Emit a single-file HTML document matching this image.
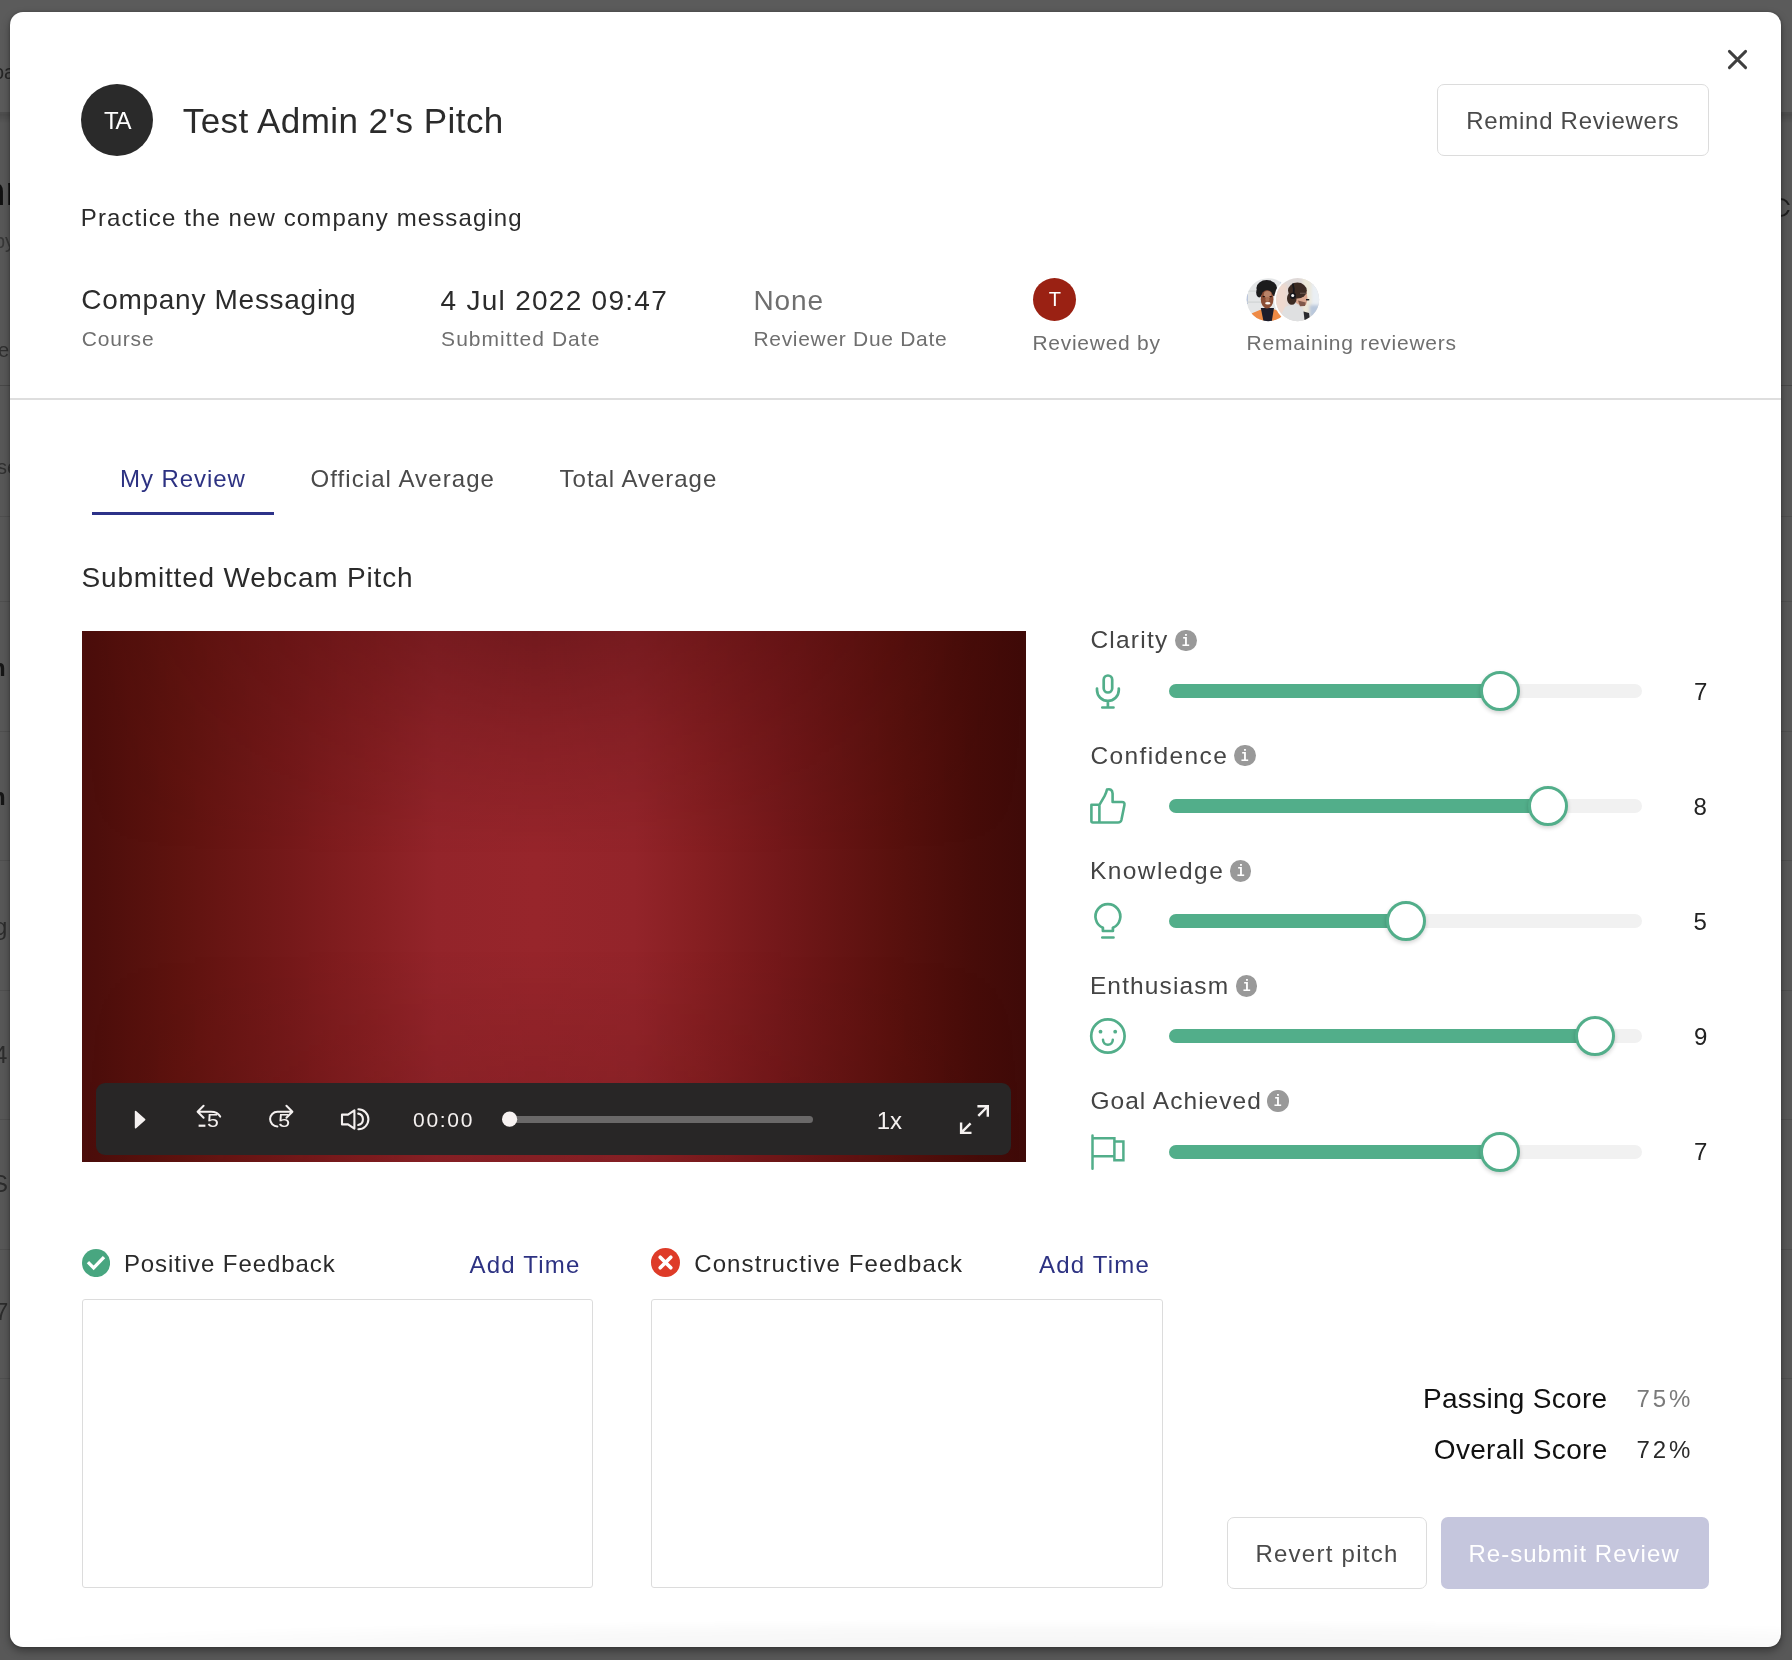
<!DOCTYPE html>
<html lang="en">
<head>
<meta charset="utf-8">
<title>Test Admin 2's Pitch</title>
<style>
*{box-sizing:border-box;margin:0;padding:0}
html,body{width:1792px;height:1660px;overflow:hidden}
body{background:#585858;font-family:"Liberation Sans",Arial,sans-serif;color:#2b2b2b;position:relative}
.abs{position:absolute;white-space:nowrap;line-height:1}
/* backdrop page fragments */
.bg-top{position:absolute;left:0;top:0;width:1792px;height:113px;background:#5b5b5b}
.bg-line{position:absolute;left:0;width:1792px;height:2px;background:#4f4f4f}
.bgt{position:absolute;white-space:nowrap;line-height:1;color:#2a2a2a}
/* modal */
#modal{position:absolute;left:10px;top:12px;width:1771px;height:1635px;background:#fff;border-radius:13px;overflow:hidden;box-shadow:0 4px 8px rgba(0,0,0,.36),0 0 3px rgba(0,0,0,.25)}
#modal .in{position:absolute;left:-10px;top:-12px;width:1792px;height:1660px;will-change:transform}
.gray{color:#6f6f6f}
.ta{border:1px solid #dcdcdc;border-radius:3px;background:#fff}
.sl{font-size:24.5px;color:#444}
.val{font-size:24px;color:#222}
.info{position:absolute;width:21.7px;height:21.7px;border-radius:50%;background:#999;color:#fff;font-family:"Liberation Mono","DejaVu Sans Mono",monospace;font-size:15.5px;line-height:21.7px;text-align:center;overflow:hidden}
.info b{font-weight:bold;display:block;font-size:16.5px;transform:translate(-.1px,.7px) scaleX(.8)}
.trk{position:absolute;left:1169px;width:473px;height:14px;border-radius:7px;background:#f1f1f1}
.trk i{display:block;height:14px;border-radius:7px;background:#52ae8a}
.thumb{position:absolute;width:40px;height:40px;border-radius:50%;background:#fff;border:3px solid #52ae8a;box-shadow:0 2px 4px rgba(0,0,0,.18)}
.btn{position:absolute;border:1.5px solid #dcdcdc;border-radius:7px;background:#fff;display:flex;align-items:center;justify-content:center;font-size:24px;color:#4a4a4a;white-space:nowrap}
</style>
</head>
<body>
<div class="bg-top"></div>
<div id="bgfrag" style="will-change:transform">
<div class="bg-line" style="top:112px;height:2px;background:#4e4e4e"></div>
<div class="bg-line" style="top:385px;height:1px;background:#484848"></div>
<div class="bg-line" style="top:516px;height:1px"></div>
<div class="bg-line" style="top:601px;height:1px"></div>
<div class="bg-line" style="top:731px;height:1px"></div>
<div class="bg-line" style="top:860px;height:1px"></div>
<div class="bg-line" style="top:990px;height:1px"></div>
<div class="bg-line" style="top:1119px;height:1px"></div>
<div class="bg-line" style="top:1249px;height:1px"></div>
<div class="bg-line" style="top:1378px;height:1px"></div>
<div class="bgt" style="left:-7px;top:62px;font-size:20px;color:#262626">oard</div>
<div class="bgt" style="left:-19px;top:171px;font-size:40px;font-weight:bold;color:#111">nn</div>
<div class="bgt" style="left:-6px;top:231px;font-size:20px;color:#383838">by</div>
<div class="bgt" style="left:-2px;top:340px;font-size:20px;color:#303030">er</div>
<div class="bgt" style="left:-3px;top:457px;font-size:20px;color:#303030">se</div>
<div class="bgt" style="left:-9px;top:656px;font-size:24px;font-weight:bold;color:#161616">n</div>
<div class="bgt" style="left:-9px;top:785px;font-size:24px;font-weight:bold;color:#161616">n</div>
<div class="bgt" style="left:-6px;top:915px;font-size:24px;color:#2c2c2c">g</div>
<div class="bgt" style="left:-6px;top:1043px;font-size:24px;color:#2c2c2c">4</div>
<div class="bgt" style="left:-8px;top:1172px;font-size:24px;color:#2c2c2c">S</div>
<div class="bgt" style="left:-5px;top:1300px;font-size:24px;color:#2c2c2c">7</div>
<div style="position:absolute;left:1771px;top:197.5px;width:19px;height:19px;border:2.3px solid #1f1f1f;border-radius:50%"></div><div style="position:absolute;left:1787px;top:204.5px;width:5px;height:5px;background:#595959"></div>
<div style="position:absolute;left:0;top:114px;width:1792px;height:9px;background:linear-gradient(to bottom,rgba(0,0,0,.14),rgba(0,0,0,0))"></div>
</div>
<div id="modal"><div class="in">

<div class="abs" style="left:0;top:1619px;width:1792px;height:28px;background:radial-gradient(ellipse 62% 100% at 60% 100%,rgba(0,0,0,.04),rgba(0,0,0,.025) 60%,rgba(0,0,0,0))"></div>
<!-- header -->
<div class="abs" id="avatar" style="left:81px;top:84px;width:72px;height:72px;border-radius:50%;background:#2a2a2a"></div>
<div class="abs" id="ta" style="left:104.1px;top:108.7px;font-size:24px;letter-spacing:-1.5px;color:#fff">TA</div>
<div class="abs" id="title" style="left:182.7px;top:103.3px;font-size:35px;letter-spacing:.45px;color:#2b2b2b">Test Admin 2's Pitch</div>
<div class="btn" id="remind" style="left:1437px;top:84px;width:272px;height:72px"></div>
<div class="abs" id="remindT" style="left:1466.2px;top:108.9px;font-size:24px;letter-spacing:.72px;color:#4a4a4a">Remind Reviewers</div>
<svg class="abs" id="closex" style="left:1726px;top:48px" width="23" height="23" viewBox="0 0 23 23"><path d="M3.4 3.4 L19.6 19.6 M19.6 3.4 L3.4 19.6" stroke="#3f3f3f" stroke-width="2.9" stroke-linecap="round" fill="none"/></svg>

<div class="abs" id="desc" style="left:80.8px;top:205.6px;font-size:24px;letter-spacing:1.11px">Practice the new company messaging</div>

<div class="abs" id="course" style="left:81.3px;top:286.4px;font-size:28px;letter-spacing:.71px">Company Messaging</div>
<div class="abs gray" id="courseL" style="left:81.8px;top:328px;font-size:21px;letter-spacing:.82px">Course</div>
<div class="abs" id="date" style="left:440.6px;top:286.5px;font-size:28px;letter-spacing:1.27px">4 Jul 2022 09:47</div>
<div class="abs gray" id="dateL" style="left:441.1px;top:328.2px;font-size:21px;letter-spacing:1.04px">Submitted Date</div>
<div class="abs gray" id="none" style="left:753.5px;top:286.5px;font-size:28px;letter-spacing:.9px">None</div>
<div class="abs gray" id="noneL" style="left:753.4px;top:328.2px;font-size:21px;letter-spacing:.7px">Reviewer Due Date</div>

<div class="abs" id="tav" style="left:1033px;top:278px;width:43px;height:43px;border-radius:50%;background:#9a2113"></div>
<div class="abs" id="tavT" style="left:1048.7px;top:289px;font-size:20px;color:#fff">T</div>
<div class="abs gray" id="revby" style="left:1032.4px;top:332.2px;font-size:21px;letter-spacing:.73px">Reviewed by</div>
<svg class="abs" id="avs" style="left:1244px;top:275px" width="78" height="49" viewBox="1244 275 78 49">
  <defs>
    <clipPath id="c1"><circle cx="1268.2" cy="299.7" r="21.5"/></clipPath>
    <clipPath id="c2"><circle cx="1297.6" cy="299.6" r="21.6"/></clipPath>
    <filter id="bl" x="-20%" y="-20%" width="140%" height="140%"><feGaussianBlur stdDeviation="0.55"/></filter>
    <filter id="bl2" x="-20%" y="-20%" width="140%" height="140%"><feGaussianBlur stdDeviation="1.4"/></filter>
  </defs>
  <!-- avatar 1 : woman, orange jacket -->
  <g clip-path="url(#c1)">
    <rect x="1246" y="277" width="45" height="46" fill="#e4e6e7"/>
    <g filter="url(#bl)">
      <rect x="1246" y="294" width="1.6" height="10" fill="#9fb0d2"/>
      <rect x="1246" y="290.500" width="16" height="1.200" fill="#d2d6d6"/>
      <rect x="1246" y="301.500" width="16" height="1.200" fill="#d0d4d4"/>
      <rect x="1280" y="279" width="5" height="7" fill="#c9d3e2"/>
      <!-- jacket -->
      <path d="M1250 324 L1251.500 313.500 L1261.500 309.300 L1274 309.300 L1283 313 L1290 319 L1290 324 Z" fill="#ee8a44"/>
      <!-- dark shirt -->
      <path d="M1260.800 308 L1274 308 L1271.300 324 L1264 324 Z" fill="#1d1f2c"/>
      <!-- hair -->
      <ellipse cx="1266.700" cy="288" rx="10.300" ry="7.900" fill="#1d1b1f"/>
      <ellipse cx="1259.200" cy="292.500" rx="3" ry="5" fill="#1d1b1f"/>
      <ellipse cx="1274" cy="291.500" rx="2.600" ry="4.600" fill="#1d1b1f"/>
      <!-- face -->
      <ellipse cx="1267.100" cy="299.200" rx="6.300" ry="9.300" fill="#8b4e34"/>
      <ellipse cx="1267.600" cy="294.500" rx="3.800" ry="3.400" fill="#b98367"/>
      <ellipse cx="1267.400" cy="299.500" rx="2" ry="2.400" fill="#a96f52"/>
      <!-- eyes / mouth -->
      <ellipse cx="1263.800" cy="296.600" rx="1.400" ry=".7" fill="#24130f"/>
      <ellipse cx="1270.700" cy="296.600" rx="1.400" ry=".7" fill="#24130f"/>
      <ellipse cx="1267.800" cy="303.300" rx="2.700" ry="1.300" fill="#fbf6f2"/>
    </g>
  </g>
  <!-- avatar 2 : man with headset -->
  <circle cx="1297.600" cy="299.600" r="23.500" fill="#fff"/>
  <g clip-path="url(#c2)">
    <rect x="1275" y="277" width="46" height="46" fill="#dfd9d8"/>
    <g filter="url(#bl2)">
      <rect x="1275" y="284" width="12" height="30" fill="#efd9cf"/>
      <rect x="1302.500" y="277" width="9" height="46" fill="#ece8d8"/>
      <rect x="1311.500" y="277" width="10" height="46" fill="#eaeff4"/>
      <rect x="1309.500" y="305" width="12" height="12" fill="#b9c8dc"/>
    </g>
    <g filter="url(#bl)">
      <!-- shirt -->
      <path d="M1280 317 L1285 307 L1296 303.500 L1303.500 310 L1306.500 324 L1280 324 Z" fill="#dfe0e1"/>
      <path d="M1303.500 311.500 L1309 313 L1310 320 L1305 324 Z" fill="#2b2b2d"/>
      <!-- face -->
      <path d="M1296.500 289 L1306.500 290 L1307.600 299.500 L1306 305 L1301.500 306 L1296 303 Z" fill="#d9a78f"/>
      <path d="M1298 300.500 L1305.800 302.500 L1305 306 L1300 306.200 Z" fill="#80594a"/>
      <!-- hair -->
      <ellipse cx="1297.400" cy="290.600" rx="9.400" ry="8" fill="#3b2a22"/>
      <ellipse cx="1291.800" cy="298.500" rx="4.800" ry="6.300" fill="#3b2a22"/>
      <!-- headset -->
      <path d="M1292.800 283.500 Q1294.500 289 1293.600 295" stroke="#15151a" stroke-width="1.700" fill="none"/>
      <circle cx="1292.900" cy="295.800" r="3.100" fill="#15151a"/>
      <circle cx="1292.700" cy="295.600" r="1.500" fill="#f6f6f6"/>
      <rect x="1306" y="299" width="3.200" height="1.400" fill="#15151a"/>
      <rect x="1300" y="292.800" width="7" height=".8" fill="#7a6a5e"/>
    </g>
  </g>
</svg>
<div class="abs gray" id="remrev" style="left:1246.6px;top:332.2px;font-size:21px;letter-spacing:.74px">Remaining reviewers</div>

<div class="abs" id="divider" style="left:0;top:398px;width:1792px;height:2px;background:#dedede"></div>

<!-- tabs -->
<div class="abs" id="tab1" style="left:120px;top:466.8px;font-size:24px;letter-spacing:.95px;color:#2d3282">My Review</div>
<div class="abs" id="tabline" style="left:92px;top:511.5px;width:182px;height:3.5px;background:#2d3289"></div>
<div class="abs" id="tab2" style="left:310.4px;top:466.8px;font-size:24px;letter-spacing:1.09px;color:#4a4a4a">Official Average</div>
<div class="abs" id="tab3" style="left:559.6px;top:466.8px;font-size:24px;letter-spacing:.97px;color:#4a4a4a">Total Average</div>

<div class="abs" id="swp" style="left:81.5px;top:563.5px;font-size:28px;letter-spacing:.82px">Submitted Webcam Pitch</div>

<!-- video -->
<div class="abs" id="video" style="left:82px;top:631px;width:944px;height:531px;background:linear-gradient(to right,#4b0d0b 0%,#4d0e0b 1.5%,#5f130f 10.3%,#76191a 22.2%,#871f22 31%,#93242a 37.5%,#97252b 47.9%,#93242a 58.5%,#871f22 64.8%,#74181a 73.6%,#5a110e 85.5%,#470c09 94.5%,#3f0a08 100%)"><div style="position:absolute;inset:0;background:linear-gradient(to bottom,rgba(34,0,0,.31) 0%,rgba(34,0,0,.15) 18%,rgba(34,0,0,0) 42%,rgba(34,0,0,0) 60%,rgba(34,0,0,.16) 100%);-webkit-mask-image:linear-gradient(to right,transparent 0%,#000 48%,transparent 100%);mask-image:linear-gradient(to right,transparent 0%,#000 48%,transparent 100%)"></div></div>
<div class="abs" id="cbar" style="left:96px;top:1083px;width:915px;height:72px;border-radius:9px;background:#282626"></div>
<svg class="abs" id="ctrls" style="left:96px;top:1083px" width="915" height="72" viewBox="96 1083 915 72" fill="none" stroke="#f5f1f0" stroke-width="2" stroke-linecap="round" stroke-linejoin="round">
  <!-- play -->
  <path d="M135.6 1111.6 L144.6 1119.6 L135.6 1127.6 Z" fill="#f5f1f0" stroke-width="1.6"/>
  <!-- rewind 5 -->
  <path d="M203.6 1105.8 L197.6 1111.8 L203.6 1117.8 M197.8 1111.8 H211 Q217.5 1111.8 220.2 1116.6"/>
  <path d="M198.6 1125.7 H205.4" stroke-width="2.2" stroke-linecap="butt"/>
  <text transform="translate(206.9 1127.3) scale(1.15 1.04)" font-family="Liberation Sans, Arial, sans-serif" font-size="18.5" fill="#f5f1f0" stroke="none">5</text>
  <!-- forward 5 -->
  <path d="M286.4 1105.8 L292.4 1111.8 L286.4 1117.8 M292.2 1111.8 H277.4 A7.3 7.3 0 0 0 277.4 1126.4"/>
  <text transform="translate(278.3 1127.3) scale(1.15 1.04)" font-family="Liberation Sans, Arial, sans-serif" font-size="18.5" fill="#f5f1f0" stroke="none">5</text>
  <!-- volume -->
  <path d="M342 1114.6 H348 L354.4 1110.4 V1128.6 L348 1124.4 H342 Z" stroke-width="2.1"/>
  <path d="M358.2 1113.6 A5.8 5.8 0 0 1 358.2 1125 M358.4 1109.3 A10 10 0 0 1 358.4 1129.3" stroke-width="2.1"/>
  <!-- scrubber -->
  <rect x="506" y="1116" width="307" height="7" rx="3.5" fill="#6a6868" stroke="none"/>
  <circle cx="509.6" cy="1119.2" r="7.6" fill="#f7f2f1" stroke="none"/>
  <!-- fullscreen -->
  <path d="M978.3 1115.8 L987.6 1106.5 M977.4 1106.3 H987.8 V1116.7 M970.6 1123.4 L961.3 1132.7 M961.1 1122.5 V1132.9 H971.5" stroke-width="2.4" stroke-linecap="butt" stroke-linejoin="miter"/>
</svg>
<div class="abs" id="time" style="left:413px;top:1109px;font-size:21px;letter-spacing:1.72px;color:#f5f1f0">00:00</div>
<div class="abs" id="speed" style="left:876.8px;top:1108.6px;font-size:24px;letter-spacing:-.2px;color:#f5f1f0">1x</div>

<!-- slider labels -->
<div class="abs sl" id="l1" style="left:1090.4px;top:628.2px;letter-spacing:1.23px">Clarity</div>
<div class="abs sl" id="l2" style="left:1090.4px;top:743.5px;letter-spacing:1.38px">Confidence</div>
<div class="abs sl" id="l3" style="left:1089.9px;top:858.7px;letter-spacing:1.46px">Knowledge</div>
<div class="abs sl" id="l4" style="left:1089.9px;top:973.8px;letter-spacing:1.14px">Enthusiasm</div>
<div class="abs sl" id="l5" style="left:1090.4px;top:1088.9px;letter-spacing:1.04px">Goal Achieved</div>
<!-- info icons -->
<div class="info" style="left:1175.2px;top:629.6px"><b>i</b></div>
<div class="info" style="left:1234.2px;top:744.6px"><b>i</b></div>
<div class="info" style="left:1229.6px;top:860px"><b>i</b></div>
<div class="info" style="left:1235.6px;top:975px"><b>i</b></div>
<div class="info" style="left:1267.2px;top:1090px"><b>i</b></div>
<!-- tracks -->
<div class="trk" style="top:684px"><i style="width:331px"></i></div>
<div class="trk" style="top:799px"><i style="width:378px"></i></div>
<div class="trk" style="top:914.3px"><i style="width:236px"></i></div>
<div class="trk" style="top:1029.3px"><i style="width:425px"></i></div>
<div class="trk" style="top:1144.5px"><i style="width:331px"></i></div>
<div class="thumb" style="left:1480.3px;top:671px"></div>
<div class="thumb" style="left:1527.6px;top:786px"></div>
<div class="thumb" style="left:1385.6px;top:901.3px"></div>
<div class="thumb" style="left:1574.6px;top:1016.3px"></div>
<div class="thumb" style="left:1480.3px;top:1131.5px"></div>
<!-- values -->
<div class="abs val" id="v1" style="left:1694px;top:679.7px">7</div>
<div class="abs val" id="v2" style="left:1693.5px;top:794.7px">8</div>
<div class="abs val" id="v3" style="left:1693.6px;top:910px">5</div>
<div class="abs val" id="v4" style="left:1694px;top:1025px">9</div>
<div class="abs val" id="v5" style="left:1694px;top:1140.2px">7</div>
<!-- slider icons -->
<svg class="abs" id="sicons" style="left:1085px;top:665px" width="50" height="515" viewBox="1085 665 50 515" fill="none" stroke="#52ae8a" stroke-width="2.7" stroke-linecap="round" stroke-linejoin="round">
  <!-- mic -->
  <rect x="1103.7" y="675.5" width="8.5" height="17" rx="4.25"/>
  <path d="M1097 688.6 V690 A10.9 10.9 0 0 0 1118.8 690 V688.6 M1107.9 701 V707.4 M1102.3 707.5 H1113.5"/>
  <!-- thumbs up -->
  <path d="M1091.4 804.8 H1099.4 L1104.4 796.4 Q1106.4 792.6 1107 789.6 Q1112.2 788.2 1112.6 793.6 V802 H1122 Q1125 802 1124.4 805.2 L1121.4 820 Q1120.8 822.5 1118 822.5 H1092.8 Q1091.4 822.5 1091.4 821 Z M1099.4 804.8 V822" stroke-width="2.6"/>
  <!-- bulb -->
  <path d="M1102.9 931 V927.8 A12.4 12.4 0 1 1 1112.9 927.8 V931 Z M1102.3 937.5 H1113.5"/>
  <!-- smiley -->
  <circle cx="1107.9" cy="1036" r="16.7"/>
  <circle cx="1100.5" cy="1031.7" r="1.9" fill="#52ae8a" stroke="none"/>
  <circle cx="1115.2" cy="1031.7" r="1.9" fill="#52ae8a" stroke="none"/>
  <path d="M1103 1039.8 A4.9 4.9 0 0 0 1112.8 1039.8" stroke-width="2.5"/>
  <!-- flag -->
  <path d="M1092.5 1135.6 V1168.8 M1092.5 1138.2 H1114.4 V1160.3 H1123.4 V1141.6 H1114.4 M1092.5 1156.2 H1114.4" stroke-width="2.5" stroke-linejoin="miter"/>
</svg>

<!-- feedback -->
<svg class="abs" id="okic" style="left:81.9px;top:1248.9px" width="28.1" height="28.1" viewBox="0 0 28 28"><circle cx="14" cy="14" r="14" fill="#48a680"/><path d="M7.1 14.3 L11.6 18.8 L20.8 9.2" fill="none" stroke="#fff" stroke-width="3.3" stroke-linecap="square" stroke-linejoin="miter"/></svg>
<div class="abs" id="pf" style="left:123.9px;top:1251.7px;font-size:24px;letter-spacing:.92px;color:#2a2a2a">Positive Feedback</div>
<div class="abs" id="at1" style="left:469.6px;top:1252.9px;font-size:24px;letter-spacing:1.2px;color:#2d3282">Add Time</div>
<div class="abs ta" id="ta1" style="left:82px;top:1299px;width:511px;height:289px"></div>
<svg class="abs" id="noic" style="left:651px;top:1248.4px" width="29" height="29" viewBox="0 0 28 28"><circle cx="14" cy="14" r="14" fill="#de3b28"/><path d="M8.9 8.9 L19.1 19.1 M19.1 8.9 L8.9 19.1" fill="none" stroke="#fff" stroke-width="3.6" stroke-linecap="round"/></svg>
<div class="abs" id="cf" style="left:694.2px;top:1251.7px;font-size:24px;letter-spacing:1.12px;color:#2a2a2a">Constructive Feedback</div>
<div class="abs" id="at2" style="left:1039px;top:1252.9px;font-size:24px;letter-spacing:1.2px;color:#2d3282">Add Time</div>
<div class="abs ta" id="ta2" style="left:651px;top:1299px;width:512px;height:289px"></div>


<!-- scores -->
<div class="abs" id="ps" style="left:1423px;top:1384.9px;font-size:28px;letter-spacing:.3px;color:#111">Passing Score</div>
<div class="abs" id="psv" style="left:1636.5px;top:1387px;font-size:24px;letter-spacing:2.9px;color:#7a7a7a">75%</div>
<div class="abs" id="os" style="left:1433.8px;top:1435.8px;font-size:28px;letter-spacing:.32px;color:#111">Overall Score</div>
<div class="abs" id="osv" style="left:1636.5px;top:1437.8px;font-size:24px;letter-spacing:2.9px;color:#2a2a2a">72%</div>
<div class="btn" id="revertB" style="left:1227px;top:1517px;width:200px;height:72px"></div>
<div class="abs" id="revert" style="left:1255.4px;top:1541.5px;font-size:24px;letter-spacing:1.26px;color:#4a4a4a">Revert pitch</div>
<div class="abs" id="resubB" style="left:1441px;top:1517px;width:267.5px;height:71.5px;border-radius:7px;background:#c5c6dd"></div>
<div class="abs" id="resub" style="left:1468.4px;top:1541.5px;font-size:24px;letter-spacing:1.04px;color:#fff">Re-submit Review</div>


</div></div>
</body>
</html>
